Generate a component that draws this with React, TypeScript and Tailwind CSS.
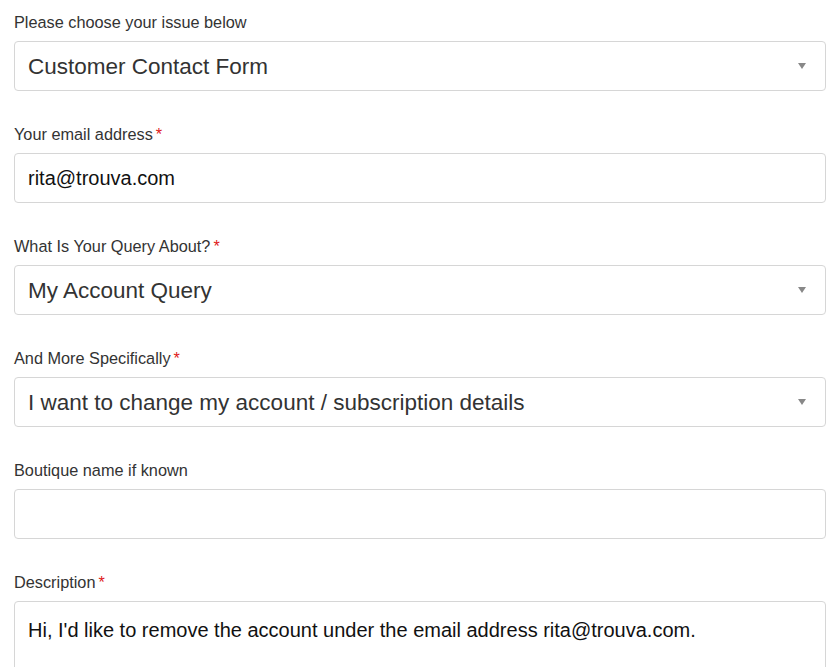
const fields = [
  { label: "Please choose your issue below", value: "Customer Contact Form", kind: "select", required: false },
  { label: "Your email address", value: "rita@trouva.com", kind: "input", required: true },
  { label: "What Is Your Query About?", value: "My Account Query", kind: "select", required: true },
  { label: "And More Specifically", value: "I want to change my account / subscription details", kind: "select", required: true },
  { label: "Boutique name if known", value: "", kind: "input", required: false },
];

function Label({ text, required }: { text: string; required: boolean }) {
  return (
    <div className="h-[21px] leading-[21px] text-[16.3px] text-[#333] mb-[8px]">
      {text}
      {required && <span className="text-[#e0201b] ml-[3px]">*</span>}
    </div>
  );
}

export default function App() {
  return (
    <div className="w-[840px] h-[667px] overflow-hidden bg-white px-[14px] pt-[12px] font-['Liberation_Sans',Arial,sans-serif]">
      {fields.map((f) => (
        <div key={f.label} className="mb-[33px]">
          <Label text={f.label} required={f.required} />
          <div className="h-[50px] border border-[#d6d6d6] rounded-[4px] flex items-center pl-[13px] pr-[19px]">
            {f.kind === "select" ? (
              <>
                <span className="flex-1 text-[22.5px] text-[#333] leading-none pt-[2px]">{f.value}</span>
                <svg width="8" height="6" viewBox="0 0 8 6">
                  <path d="M0 0H8L4 6Z" fill="#888" />
                </svg>
              </>
            ) : (
              <span className="text-[20px] text-[#111] leading-none">{f.value}</span>
            )}
          </div>
        </div>
      ))}
      <div>
        <Label text="Description" required />
        <div className="h-[120px] border border-[#d6d6d6] rounded-[4px] pl-[13px] pt-[17px] text-[20px] text-[#111] leading-[22px]">
          Hi, I'd like to remove the account under the email address rita@trouva.com.
        </div>
      </div>
    </div>
  );
}
